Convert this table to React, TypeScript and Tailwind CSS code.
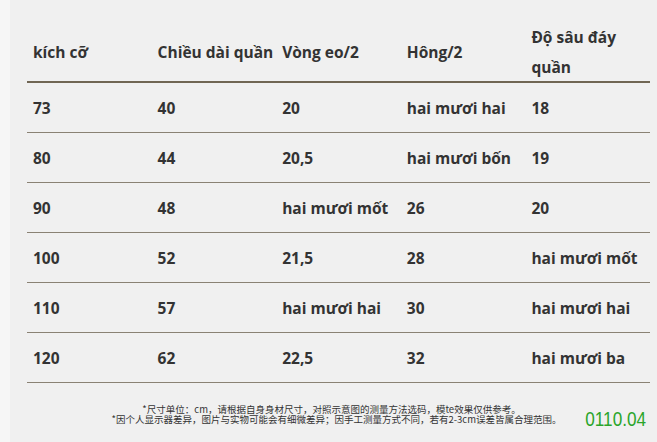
import React from "react";

const headers = ["kích cỡ", "Chiều dài quần", "Vòng eo/2", "Hông/2", "Độ sâu đáy quần"];
const rows = [
  ["73", "40", "20", "hai mươi hai", "18"],
  ["80", "44", "20,5", "hai mươi bốn", "19"],
  ["90", "48", "hai mươi mốt", "26", "20"],
  ["100", "52", "21,5", "28", "hai mươi mốt"],
  ["110", "57", "hai mươi hai", "30", "hai mươi hai"],
  ["120", "62", "22,5", "32", "hai mươi ba"],
];

export default function App() {
  return (
    <div className="w-[657px] h-[442px] overflow-hidden flex bg-[#f0f0f0]" style={{ fontFamily: '"Open Sans", "Noto Sans", sans-serif' }}>
      <div className="w-[10px] shrink-0 bg-[#f6f6f6]" />
      <div className="flex-1 flex flex-col pl-[17px] pr-[7px] pt-[22px]">
        <div className="grid grid-cols-5 border-b-2 border-[#706654] h-[61px] text-[15.5px] font-bold text-[#333333]">
          {headers.map((h, i) => (
            <div key={i} className={"flex items-center pl-[6px] leading-[30px] " + (i < 4 ? "whitespace-nowrap" : "pr-2")}>
              {h}
            </div>
          ))}
        </div>
        {rows.map((r, ri) => (
          <div key={ri} className="grid grid-cols-5 border-b border-[#8a8274] h-[50px] text-[15.5px] font-bold text-[#333333]">
            {r.map((c, ci) => (
              <div key={ci} className="flex items-center pl-[6px] pt-[3px] whitespace-nowrap">
                {c}
              </div>
            ))}
          </div>
        ))}
        <div className="grid grid-cols-[1fr_auto_1fr] mt-[21px]">
          <div />
          <div className="text-center text-[9.5px] leading-[10px] text-[#333333] pr-[4px]" style={{ fontFamily: '"Noto Sans CJK SC", sans-serif' }}>
            <div className="pr-[10px]">*尺寸单位：cm，请根据自身身材尺寸，对照示意图的测量方法选码，模te效果仅供参考。</div>
            <div>*因个人显示器差异，图片与实物可能会有细微差异；因手工测量方式不同，若有2-3cm误差皆属合理范围。</div>
          </div>
          <div className="flex justify-end items-start pt-[5px] pr-[4px]">
            <span className="inline-block text-[19.5px] leading-[20px] text-[#2aa52a] origin-right scale-x-[0.88]" style={{ fontFamily: '"Liberation Sans", Arial, sans-serif' }}>
              0110.04
            </span>
          </div>
        </div>
      </div>
    </div>
  );
}
